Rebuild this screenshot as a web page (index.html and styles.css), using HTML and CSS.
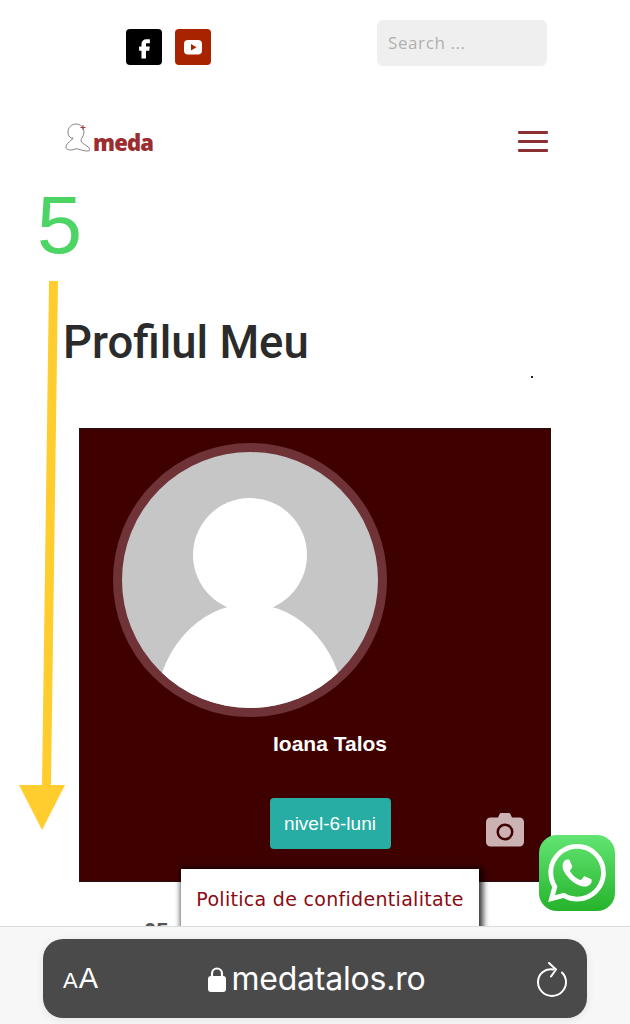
FILE: index.html
```html
<!DOCTYPE html>
<html lang="ro">
<head>
    <meta charset="UTF-8">
    <meta name="viewport" content="width=device-width, initial-scale=1.0">
    <title>Profilul Meu</title>
    <link rel="stylesheet" href="styles.css">
</head>
<body>
    <div class="page">
        <div class="top-bar">
            <div class="social">
                <a class="social-icon facebook">
                    <svg viewBox="0 0 24 24" width="27" height="27"><path fill="#fff" d="M14.2 8.200h2.600V4.600h-3c-3 0-4.500 1.800-4.500 4.400v2.200H7.200v3.600h2.100v7h4v-7h2.900l.5-3.600h-3.400V9.400c0-.8.3-1.200.9-1.200z"/></svg>
                </a>
                <a class="social-icon youtube">
                    <svg viewBox="0 0 24 24" width="24" height="24"><rect x="3" y="5" width="18" height="14.500" rx="4" fill="#fff"/><path fill="#a82400" d="M10 9l5.500 3.200L10 15.500z"/></svg>
                </a>
            </div>
            <div class="search">Search ...</div>
        </div>

        <div class="nav-bar">
            <div class="logo">
                <svg viewBox="0 0 25 29" width="25" height="29"><path fill="none" stroke="#6d6466" stroke-width="0.8" d="M8 15c-1 3-6 4-7 8-.5 3 2 4 5 4 3 0 4-2 7-1 3 1 6 2 10 2 2 0 2-2 1-3-2-3-7-4-8-7-.5-2 3-5 3-9 0-5-4-8-8-8-5 0-8 4-8 8 0 3 1 5 3 6z"/><path stroke="#a33a40" stroke-width="1" d="M18 2v5M15.500 4.500h5"/></svg>
                <span class="logo-text">meda</span>
            </div>
            <div class="hamburger"><span></span><span></span><span></span></div>
        </div>

        <main class="content">
            <h1 class="title">Profilul Meu</h1>
            <div class="dot-row"><span class="dot"></span></div>

            <section class="profile-card">
                <div class="avatar">
                    <svg viewBox="0 0 256 256" width="256" height="256">
                        <circle cx="128" cy="103" r="57" fill="#fff"/>
                        <ellipse cx="128" cy="262" rx="95" ry="110" fill="#fff"/>
                    </svg>
                </div>
                <div class="profile-info">
                    <div class="profile-name">Ioana Talos</div>
                    <button class="level-button">nivel-6-luni</button>
                </div>
                <svg class="camera" viewBox="0 0 38 34" width="38" height="34">
                    <path fill="#cdb2b4" fill-rule="evenodd" d="M12 4.500 13.500 1.200C13.800.5 14.500 0 15.300 0h7.400c.8 0 1.500.5 1.800 1.200L26 4.500h7.500c2.500 0 4.500 2 4.500 4.500v20c0 2.500-2 4.500-4.500 4.500h-29C2 33.500 0 31.500 0 29V9c0-2.500 2-4.500 4.500-4.500zM19 10.500a8.500 8.500 0 1 0 0 17 8.500 8.500 0 0 0 0-17zm0 2.500a6 6 0 1 1 0 12 6 6 0 0 1 0-12z"/>
                </svg>
            </section>

            <div class="below-card">05</div>
        </main>

        <!-- annotation over the page -->
        <div class="step-number">5</div>
        <svg class="step-arrow" viewBox="0 0 70 560" width="70" height="560">
            <path fill="#ffce2e" d="M32 0h9l-7 504h14l-23 45L2 504h23z"/>
        </svg>

        <div class="privacy-popup">Politica de confidentialitate</div>

        <a class="whatsapp">
            <svg viewBox="0 0 24 24" width="58" height="58"><path fill="#fff" d="M17.472 14.382c-.297-.149-1.758-.867-2.03-.967-.273-.099-.471-.148-.67.15-.197.297-.767.966-.94 1.164-.173.199-.347.223-.644.075-.297-.15-1.255-.463-2.39-1.475-.883-.788-1.48-1.761-1.653-2.059-.173-.297-.018-.458.13-.606.134-.133.298-.347.446-.52.149-.174.198-.298.298-.497.099-.198.05-.371-.025-.52-.075-.149-.669-1.612-.916-2.207-.242-.579-.487-.5-.669-.51-.173-.008-.371-.01-.57-.01-.198 0-.52.074-.792.372-.272.297-1.04 1.016-1.04 2.479 0 1.462 1.065 2.875 1.213 3.074.149.198 2.096 3.2 5.077 4.487.709.306 1.262.489 1.694.625.712.227 1.36.195 1.871.118.571-.085 1.758-.719 2.006-1.413.248-.694.248-1.289.173-1.413-.074-.124-.272-.198-.57-.347m-5.421 7.403h-.004a9.87 9.87 0 01-5.031-1.378l-.361-.214-3.741.982.998-3.648-.235-.374a9.86 9.86 0 01-1.51-5.26c.001-5.45 4.436-9.884 9.888-9.884 2.64 0 5.122 1.03 6.988 2.898a9.825 9.825 0 012.893 6.994c-.003 5.45-4.437 9.884-9.885 9.884m8.413-18.297A11.815 11.815 0 0012.05 0C5.495 0 .16 5.335.157 11.892c0 2.096.547 4.142 1.588 5.945L.057 24l6.305-1.654a11.882 11.882 0 005.683 1.448h.005c6.554 0 11.89-5.335 11.893-11.893a11.821 11.821 0 00-3.48-8.413z"/></svg>
        </a>

        <!-- browser toolbar -->
        <div class="browser-bar">
            <div class="address-pill">
                <div class="text-size"><span class="small-a">A</span><span class="big-a">A</span></div>
                <div class="address">
                    <svg viewBox="0 0 20 26" width="20" height="26"><path fill="none" stroke="#fff" stroke-width="2.200" d="M5 12V7.500a5 5 0 0 1 10 0V12"/><rect x="1" y="10" width="18" height="16" rx="3" fill="#fff"/></svg>
                    <span>medatalos.ro</span>
                </div>
                <svg class="reload" viewBox="0 0 32 36" width="32" height="36"><path fill="none" stroke="#fff" stroke-width="2" stroke-linecap="round" stroke-linejoin="round" d="M17 7.500C9 6 2 12 2 20a14 14 0 0 0 28 0c0-4-1.500-7-4-9.500M13 1l7 6.500-5 7"/></svg>
            </div>
        </div>
    </div>
</body>
</html>
```

FILE: styles.css
```css
* {
    box-sizing: border-box;
}
body {
    margin: 0;
    padding: 0;
    background-color: #fff;
    font-family: 'Liberation Sans', Arial, sans-serif;
}
.page {
    position: relative;
    width: 630px;
    height: 1024px;
    overflow: hidden;
    background-color: #fff;
}
.top-bar {
    display: flex;
    justify-content: space-between;
    align-items: flex-start;
    height: 66px;
    padding: 20px 83px 0 126px;
}
.social {
    display: flex;
    gap: 13px;
    margin-top: 9px;
}
.social-icon {
    display: flex;
    align-items: center;
    justify-content: center;
    width: 36px;
    height: 36px;
    border-radius: 4px;
}
.facebook {
    background-color: #000;
}
.youtube {
    background-color: #a82400;
}
.search {
    width: 170px;
    height: 46px;
    padding: 13px 11px;
    background-color: #efefef;
    border-radius: 6px;
    color: #b0b0b0;
    font-family: 'Open Sans', sans-serif;
    font-size: 17px;
    line-height: 20px;
    letter-spacing: 0.6px;
}
.nav-bar {
    display: flex;
    justify-content: space-between;
    align-items: center;
    height: 42px;
    margin-top: 50px;
    padding: 0 82px 0 65px;
}
.logo {
    display: flex;
    align-items: flex-end;
}
.logo-text {
    margin-bottom: -2px;
    margin-left: 3px;
    color: #9b2c2f;
    font-family: 'Open Sans', sans-serif;
    font-size: 22px;
    font-weight: 800;
    line-height: 24px;
    letter-spacing: -0.8px;
}
.hamburger {
    display: flex;
    flex-direction: column;
    gap: 6px;
    width: 30px;
    margin-top: 8px;
}
.hamburger span {
    height: 3px;
    background-color: #8c2f33;
    border-radius: 1px;
}
.content {
    padding: 0 79px;
}
.title {
    margin: 159px 0 0 -16px;
    color: #2b2b2b;
    font-family: Roboto, sans-serif;
    font-size: 45.400px;
    font-weight: 500;
    line-height: 52px;
}
.dot-row {
    display: flex;
    justify-content: flex-end;
    height: 59px;
    padding: 7px 18px 0 0;
}
.dot {
    width: 2px;
    height: 2px;
    background-color: #222;
}
.profile-card {
    position: relative;
    width: 472px;
    height: 454px;
    padding: 14px 0 0 33px;
    background-color: #3f0000;
    border: 1px solid #241010;
}
.avatar {
    width: 274px;
    height: 274px;
    background-color: #c6c6c6;
    border: 9px solid #6f3236;
    border-radius: 50%;
    overflow: hidden;
}
.profile-info {
    display: flex;
    flex-direction: column;
    align-items: center;
    padding-right: 3px;
    margin-top: 13px;
}
.profile-name {
    color: #fff;
    font-size: 21px;
    font-weight: 700;
    line-height: 28px;
}
.level-button {
    width: 121px;
    height: 51px;
    margin-top: 40px;
    background-color: #27ada3;
    border: none;
    border-radius: 4px;
    color: #fff;
    font-family: 'Liberation Sans', Arial, sans-serif;
    font-size: 19px;
}
.camera {
    position: absolute;
    right: 26px;
    bottom: 34px;
}
.below-card {
    margin: 36px 0 0 65px;
    color: #555;
    font-size: 22px;
    font-weight: 700;
}
.step-number {
    position: absolute;
    left: 37px;
    top: 178px;
    color: #4cd464;
    font-size: 81px;
    line-height: 94px;
}
.step-arrow {
    position: absolute;
    left: 17px;
    top: 281px;
}
.privacy-popup {
    position: absolute;
    left: 181px;
    top: 869px;
    width: 298px;
    height: 80px;
    padding-top: 19px;
    background-color: #fff;
    box-shadow: 2px 1px 6px 2px rgba(0, 0, 0, 0.8);
    color: #8a0a12;
    font-family: 'DejaVu Sans', sans-serif;
    font-size: 19px;
    line-height: 22px;
    letter-spacing: 0.3px;
    text-align: center;
    white-space: nowrap;
}
.whatsapp {
    position: absolute;
    left: 539px;
    top: 835px;
    display: flex;
    align-items: center;
    justify-content: center;
    width: 76px;
    height: 76px;
    border-radius: 18px;
    background: linear-gradient(#62e573, #26b32b);
}
.browser-bar {
    position: absolute;
    left: 0;
    right: 0;
    bottom: 0;
    height: 98px;
    padding: 12px 43px 0;
    background-color: #f7f7f7;
    border-top: 1px solid #dcdcdc;
}
.address-pill {
    display: flex;
    align-items: center;
    justify-content: space-between;
    height: 79px;
    padding: 0 19px 0 20px;
    background-color: #4a4a4a;
    border-radius: 20px;
    box-shadow: 0 2px 10px rgba(0, 0, 0, 0.08);
    color: #fff;
}
.text-size {
    display: flex;
    align-items: baseline;
    width: 40px;
    font-size: 29px;
}
.small-a {
    font-size: 22px;
    margin-right: 1px;
}
.address {
    display: flex;
    align-items: center;
    gap: 4px;
    margin-right: 6px;
    font-family: Inter, sans-serif;
    font-size: 32px;
}
.address span {
    letter-spacing: -0.2px;
}
.reload {
    margin-top: 2px;
}
```
